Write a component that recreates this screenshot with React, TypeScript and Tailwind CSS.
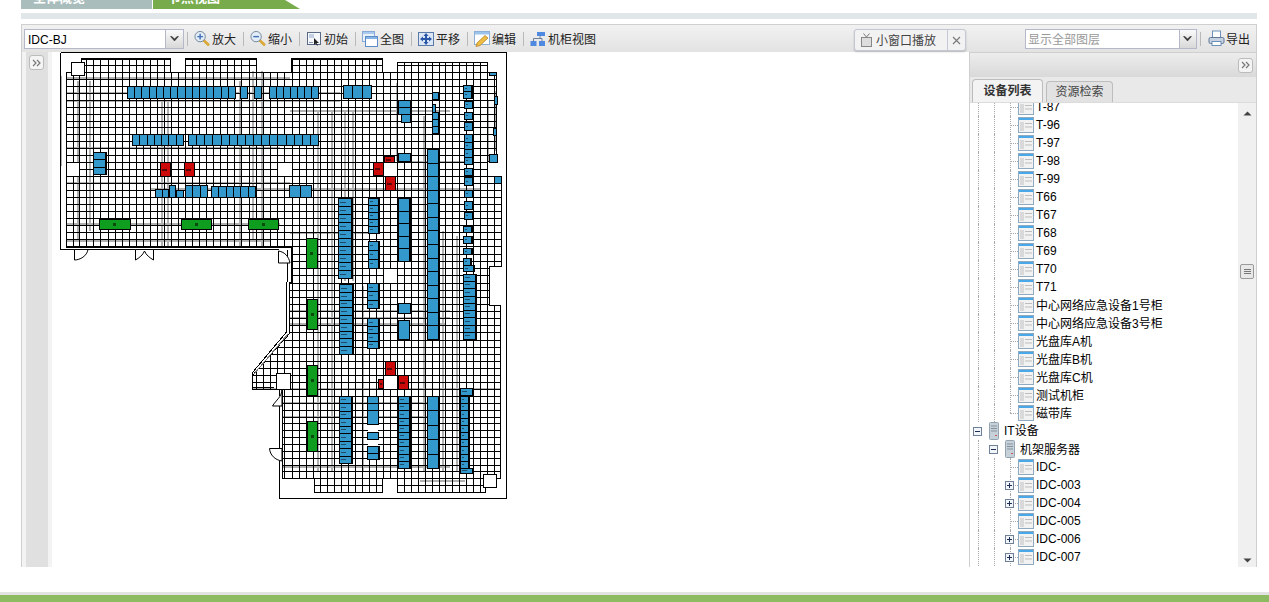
import React from 'react';

const cjk = '"Liberation Sans", "Noto Sans CJK SC", sans-serif';

// [x, y, w, h, cells, vertical?, label marks?]
type Rack = [number, number, number, number, number, boolean?, boolean?];

const blueRacks: Rack[] = [
  [127, 85, 108, 12, 15], [240, 85, 7, 12, 1], [254, 85, 7, 12, 1], [269, 85, 49, 12, 7], [343, 84, 28, 13, 3],
  [132, 133, 51, 11, 7], [188, 133, 130, 11, 16],
  [93, 151, 12, 22, 3, true],
  [155, 188, 13, 8, 2], [169, 184, 6, 12, 1], [176, 189, 7, 7, 1], [185, 184, 22, 12, 3], [211, 185, 44, 11, 6], [289, 184, 22, 12, 2],
  [398, 99, 12, 14, 2, true], [401, 113, 9, 8, 1], [398, 152, 12, 8, 1],
  [432, 91, 6, 7, 1], [432, 103, 3, 8, 1], [432, 111, 6, 21, 3, true],
  [338, 197, 13, 80, 10, true, true], [339, 283, 13, 70, 9, true, true],
  [368, 197, 10, 35, 5, true, true], [368, 240, 10, 27, 3, true, true],
  [367, 282, 11, 25, 3, true, true], [367, 317, 11, 30, 4, true, true],
  [398, 197, 11, 63, 5, true], [398, 302, 12, 10, 1], [398, 319, 11, 19, 1],
  [427, 148, 11, 190, 14, true],
  [463, 84, 8, 6, 1, false, true], [463, 90, 8, 7, 1, false, true], [464, 100, 8, 7, 1, false, true], [464, 111, 8, 7, 1, false, true],
  [464, 121, 8, 8, 1, false, true], [464, 133, 8, 30, 4, true, true], [464, 167, 8, 7, 1, false, true], [464, 176, 8, 8, 1, false, true],
  [464, 189, 8, 7, 1, false, true], [464, 200, 8, 8, 1, false, true], [464, 211, 8, 7, 1, false, true], [463, 225, 8, 6, 1, false, true],
  [463, 235, 8, 7, 1, false, true], [463, 247, 8, 6, 1, false, true], [463, 257, 7, 7, 1, false, true], [463, 264, 10, 6, 1, false, true],
  [463, 273, 12, 65, 9, true, true],
  [489, 71, 7, 3, 1], [494, 95, 3, 8, 1], [493, 127, 3, 7, 1], [489, 153, 8, 8, 1], [494, 175, 7, 7, 1],
  [339, 395, 12, 67, 9, true, true],
  [367, 395, 11, 7, 1], [367, 402, 11, 7, 1], [367, 409, 11, 14, 1], [367, 431, 11, 7, 1], [367, 445, 11, 13, 2, true],
  [398, 395, 11, 72, 10, true, true], [427, 395, 11, 72, 5, true],
  [460, 387, 12, 7, 1, false, true], [460, 395, 8, 72, 10, true, true], [460, 467, 12, 5, 1, false, true],
];

const greenRacks: number[][] = [
  [99, 218, 31, 10], [181, 218, 30, 10], [248, 218, 30, 10], [306, 237, 11, 30], [307, 298, 10, 30], [307, 364, 10, 30], [307, 420, 10, 30],
];

const redRacks: number[][] = [
  [160, 161, 10, 14], [184, 161, 10, 14], [384, 155, 10, 6], [373, 161, 10, 13], [385, 175, 10, 14],
  [385, 360, 10, 14], [378, 378, 5, 9], [398, 374, 10, 14],
];

const holes: number[][] = [
  [67, 162, 12, 13], [278, 162, 14, 13], [384, 162, 13, 13], [384, 375, 13, 13], [384, 268, 13, 14],
  [368, 424, 10, 7], [368, 439, 10, 6],
];

const grayV: number[][] = [
  [61, 75, 165], [78, 80, 240], [90, 80, 230], [162, 100, 245], [168, 100, 245], [240, 80, 245], [253, 70, 240], [262, 70, 245],
  [318, 110, 470], [332, 110, 470], [345, 110, 280], [353, 110, 280], [363, 285, 470], [397, 82, 160], [424, 115, 470], [443, 230, 470],
  [457, 235, 470], [488, 100, 160], [496, 90, 150],
];

const grayH: number[][] = [
  [67, 290, 77], [67, 340, 92], [67, 340, 100], [67, 280, 147], [290, 450, 110], [67, 290, 182], [150, 480, 188], [67, 280, 223],
  [67, 270, 240], [290, 380, 232], [289, 450, 310], [289, 450, 317], [289, 445, 323], [252, 500, 388], [282, 440, 402], [282, 440, 416],
  [282, 450, 466], [420, 465, 480], [397, 470, 161],
];

const gridPoly =
  '81.5,57.5 170.5,57.5 170.5,71.5 185.5,71.5 185.5,57.5 256.5,57.5 256.5,71.5 291.5,71.5 291.5,57.5 382.5,57.5 382.5,71.5 397.5,71.5 397.5,61.5 487.5,61.5 487.5,71.5 496.5,71.5 496.5,160.5 487.5,160.5 487.5,175.5 501.5,175.5 501.5,265.5 489.5,265.5 489.5,304.5 500.5,304.5 500.5,477.5 485.5,477.5 485.5,491.5 397.5,491.5 397.5,477.5 382.5,477.5 382.5,491.5 314.5,491.5 314.5,477.5 282.5,477.5 282.5,388.5 252.5,388.5 252.5,374.5 289.5,332.5 289.5,281.5 291.5,281.5 291.5,246.5 66.5,246.5 66.5,71.5 81.5,71.5';

// the drawing's grid is not quite regular, so each stretch has its own pitch
function gridLines(stretches: [number, number, number][]) {
  const lines: number[] = [];
  for (const [start, pitch, count] of stretches) {
    for (let k = 0; k < count; k++) lines.push(Math.round(start + k * pitch) + 0.5);
  }
  return lines;
}

const vLines = gridLines([[66.3, 6.5, 2], [79.3, 7.05, 28], [276.7, 7.5, 2], [291.7, 7, 13], [382.7, 7.15, 2], [397, 6.92, 13], [487, 7.35, 3]]);
const hLines = gridLines([[57.5, 6.89, 17], [174.6, 7.07, 10], [245.3, 7.28, 5], [281.7, 7.1, 15], [388.2, 6.85, 14], [484.1, 6.9, 2]]);

function RackCells({ rack, fill }: { rack: Rack; fill: string }) {
  const [x, y, w, h, n, vertical, mark] = rack;
  const cells = [];
  for (let i = 0; i < n; i++) {
    const cx = vertical ? x : x + Math.round((i * w) / n);
    const cy = vertical ? y + Math.round((i * h) / n) : y;
    const cw = vertical ? w : Math.round(((i + 1) * w) / n) - Math.round((i * w) / n);
    const ch = vertical ? Math.round(((i + 1) * h) / n) - Math.round((i * h) / n) : h;
    cells.push(
      <g key={i}>
        <rect x={cx + 0.5} y={cy + 0.5} width={cw} height={ch} fill={fill} stroke="#000" />
        {mark && <rect x={cx + 2} y={cy + Math.floor(ch / 2)} width={Math.max(cw - 7, 2)} height={1} fill="#1d4d6b" />}
      </g>
    );
  }
  return (
    <>
      {cells}
      {/* racks have a heavier right edge */}
      {(vertical || mark) && <rect x={x + w + 1} y={y} width={1} height={h + 1} fill="#000" />}
    </>
  );
}

function FloorPlan() {
  return (
    <svg width={450} height={450} viewBox="60 51 450 450" className="block" shapeRendering="crispEdges">
      <defs>
        <clipPath id="grid-area">
          <polygon points={gridPoly} />
        </clipPath>
      </defs>
      {grayV.map(([x, a, b], i) => (
        <line key={i} x1={x} x2={x} y1={a} y2={b} stroke="#b0b0b0" strokeWidth={2} />
      ))}
      {grayH.map(([a, b, y], i) => (
        <line key={i} x1={a} x2={b} y1={y} y2={y} stroke="#b0b0b0" strokeWidth={2} />
      ))}
      <g clipPath="url(#grid-area)">
        {vLines.map((x) => (
          <line key={x} x1={x} x2={x} y1={51} y2={500} stroke="#000" />
        ))}
        {hLines.map((y) => (
          <line key={y} x1={60} x2={510} y1={y} y2={y} stroke="#000" />
        ))}
      </g>
      <polygon points={gridPoly} fill="none" stroke="#000" />
      {holes.map(([x, y, w, h], i) => (
        <rect key={i} x={x} y={y} width={w} height={h} fill="#fff" />
      ))}
      {/* outer wall */}
      <path
        d="M60.5 51.5H506.5V497.5H279.5V405M279.5 388V395M60.5 51.5V248.5H279M287 248.5V280.5L286.5 331L252.5 371.5V386.5H274"
        fill="none"
        stroke="#000"
      />
      <path d="M254 373L288 333" fill="none" stroke="#777" />
      {/* corner boxes */}
      <rect x={71.5} y={61.5} width={13} height={13} fill="#fff" stroke="#000" />
      <rect x={483.5} y={473.5} width={13} height={13} fill="#fff" stroke="#000" />
      <rect x={276.5} y={372.5} width={14} height={16} fill="#fff" stroke="#000" />
      {/* doors */}
      <g shapeRendering="auto" fill="#fff" stroke="#000">
        <path d="M74.5 248.5V259C80 259 87 255 88 248.5Z" />
        <path d="M135.5 248.5V259C139 257 143 254 144.5 250C146 254 150 257 153.5 259V248.5Z" />
        <path d="M278.5 250C285 251 289 256 290 262H278.5Z" />
        <path d="M272.5 405H282V388C282 396 276 399 272.5 405Z" />
        <path d="M269.5 447.5H282V460C275 459 270 454 269.5 447.5Z" />
      </g>
      {blueRacks.map((r, i) => (
        <RackCells key={i} rack={r} fill="#3399cc" />
      ))}
      {greenRacks.map(([x, y, w, h], i) => (
        <g key={i}>
          <rect x={x + 0.5} y={y + 0.5} width={w} height={h} fill="#0f9d20" stroke="#000" strokeWidth={1} />
          <rect x={x + Math.floor(w / 2) - 1} y={y + Math.floor(h / 2) - 1} width={3} height={3} fill="#0a4a10" />
        </g>
      ))}
      {redRacks.map(([x, y, w, h], i) => (
        <g key={i}>
          <rect x={x + 0.5} y={y + 0.5} width={w} height={h} fill="#cc0a0a" stroke="#000" />
          <rect x={x + 2} y={y + Math.floor(h / 2)} width={Math.max(w - 5, 2)} height={2} fill="#5a0606" />
        </g>
      ))}
    </svg>
  );
}

function Sep() {
  return <span className="w-px h-[14px] bg-[#b9b9b9]" />;
}

function Expand() {
  return (
    <span className="flex w-[15px] h-[15px] items-center justify-center rounded-[3px] border border-[#bbb] bg-[#f4f4f4]">
      <svg width="9" height="8" viewBox="0 0 9 8" fill="none" stroke="#777" strokeWidth="1.2">
        <path d="M1 1L4 4L1 7M5 1L8 4L5 7" />
      </svg>
    </span>
  );
}

function ComboArrow({ w }: { w: string }) {
  return (
    <span className={`flex ${w} h-full items-center justify-center border-l border-[#b5b8c8] bg-gradient-to-b from-[#fafafa] to-[#d8d8d8]`}>
      <svg width="9" height="6" viewBox="0 0 9 6">
        <path d="M0.5 0.5L4.5 5L8.5 0.5L7 0.5L4.5 3L2 0.5Z" fill="#333" stroke="#333" strokeWidth="0.5" />
      </svg>
    </span>
  );
}

const toolIcons: Record<string, React.ReactNode> = {
  in: (
    <svg width="17" height="17" viewBox="0 0 17 17">
      <path d="M10.5 10.5L15 15" stroke="#d9a93a" strokeWidth="3" strokeLinecap="round" />
      <circle cx="6.5" cy="6.5" r="5.5" fill="#e3edf8" stroke="#6f8299" />
      <path d="M6.5 3.5V9.5M3.5 6.5H9.5" stroke="#3f6fb5" strokeWidth="1.5" />
    </svg>
  ),
  out: (
    <svg width="17" height="17" viewBox="0 0 17 17">
      <path d="M10.5 10.5L15 15" stroke="#d9a93a" strokeWidth="3" strokeLinecap="round" />
      <circle cx="6.5" cy="6.5" r="5.5" fill="#e3edf8" stroke="#6f8299" />
      <path d="M3.5 6.5H9.5" stroke="#3f6fb5" strokeWidth="1.5" />
    </svg>
  ),
  init: (
    <svg width="16" height="16" viewBox="0 0 16 16">
      <rect x="1.5" y="1.5" width="13" height="12" fill="#f7f8fb" stroke="#5a6a85" />
      <rect x="3" y="3" width="5" height="4" fill="#c3d0e4" />
      <path d="M3 11.5H7" stroke="#8d99ae" />
      <path d="M8 7L13 12H10.5L12 14.5H11L9.5 12.5L8 14Z" fill="#222" />
    </svg>
  ),
  full: (
    <svg width="16" height="16" viewBox="0 0 16 16">
      <rect x="0.5" y="0.5" width="12" height="10" fill="#e9f1fa" stroke="#86a9d6" />
      <rect x="1" y="1" width="11" height="2" fill="#a9c9ee" />
      <rect x="3.5" y="5.5" width="12" height="10" fill="#fff" stroke="#5b8cc9" />
      <rect x="4" y="6" width="11" height="2" fill="#84b3e6" />
    </svg>
  ),
  pan: (
    <svg width="16" height="16" viewBox="0 0 16 16">
      <rect x="0.5" y="1.5" width="15" height="13" fill="#dbe7f6" stroke="#5a7aa8" />
      <path d="M8 2L10.5 5H9V7H11V5.5L14 8L11 10.5V9H9V11H10.5L8 14L5.5 11H7V9H5V10.5L2 8L5 5.5V7H7V5H5.5Z" fill="#2a56a8" />
    </svg>
  ),
  edit: (
    <svg width="16" height="16" viewBox="0 0 16 16">
      <rect x="0.5" y="0.5" width="15" height="13" fill="#fff" stroke="#8cafd8" />
      <rect x="1" y="1" width="14" height="2.5" fill="#9cc3ec" />
      <path d="M2 15.5L3 12L11 4.5L14 7L6 14.5Z" fill="#eebd45" stroke="#b5842a" strokeWidth="0.8" />
    </svg>
  ),
  rack: (
    <svg width="16" height="16" viewBox="0 0 16 16">
      <rect x="7" y="1" width="8" height="4" fill="#4f8ae0" />
      <rect x="0.5" y="10" width="6" height="5" fill="#4f8ae0" />
      <rect x="9" y="10" width="6" height="5" fill="#4f8ae0" />
      <path d="M10 5V7.5M3.5 10V7.5H12V10" stroke="#6c7f9c" fill="none" />
    </svg>
  ),
};

function ToolButton({ icon, label }: { icon: string; label: string }) {
  return (
    <span className="flex items-center gap-[2px] ml-[6px] mr-[7px] text-[12px] leading-none text-[#222]">
      <span className="flex w-[16px] h-[17px] items-center justify-center">{toolIcons[icon]}</span>
      <span className="pt-[2px]">{label}</span>
    </span>
  );
}

function RowIcon() {
  return (
    <svg width="16" height="16" viewBox="0 0 16 16" className="shrink-0">
      <rect x="0.5" y="0.5" width="15" height="15" fill="#f2f2f2" stroke="#8fa9c0" />
      <rect x="1" y="1" width="14" height="2" fill="#4aa7e8" />
      <rect x="2" y="5" width="4" height="9" fill="#d9d9d9" />
      <path d="M7 6.5H14M7 10H14" stroke="#bdbdbd" />
    </svg>
  );
}

function ServerIcon() {
  return (
    <svg width="12" height="18" viewBox="0 0 12 18" className="shrink-0">
      <rect x="1.5" y="0.5" width="9" height="17" rx="1" fill="#c6d0d8" stroke="#93a3b0" />
      <path d="M3 4H9M3 6.5H9M3 9H9" stroke="#84929e" />
      <rect x="7" y="13" width="2" height="1" fill="#c55" />
    </svg>
  );
}

function Expander({ open }: { open?: boolean }) {
  return (
    <svg width="9" height="9" viewBox="0 0 9 9" className="shrink-0 bg-[#eef2f7]">
      <rect x="0.5" y="0.5" width="8" height="8" fill="#f2f5fa" stroke="#6f7f96" />
      <path d={open ? 'M2 4.5H7' : 'M2 4.5H7M4.5 2V7'} stroke="#1d2f52" />
    </svg>
  );
}

// one 16px indent column holding a dotted guide
function Guide() {
  return (
    <span className="w-4 h-full shrink-0">
      <span className="block ml-2 h-full border-l border-dotted border-[#aaa]" />
    </span>
  );
}

function Elbow({ last, expand }: { last?: boolean; expand?: boolean }) {
  return (
    <span className="relative flex w-4 h-full shrink-0 items-center justify-center">
      <span className={`absolute left-2 top-0 border-l border-dotted border-[#aaa] ${last ? 'h-1/2' : 'h-full'}`} />
      <span className="absolute left-2 top-1/2 w-2 border-t border-dotted border-[#aaa]" />
      {expand && (
        <span className="relative -ml-px">
          <Expander />
        </span>
      )}
    </span>
  );
}

function Leaf({ label, expand, last }: { label: string; expand?: boolean; last?: boolean }) {
  // CJK labels sit a pixel higher in this font stack
  const hasCjk = /[\u4e00-\u9fff]/.test(label);
  return (
    <div className="flex h-[18px] items-center shrink-0">
      <Guide />
      <Guide />
      <Elbow expand={expand} last={last} />
      <RowIcon />
      <span className={`ml-[2px] whitespace-nowrap text-[12px] leading-none text-black ${hasCjk ? 'pt-[2px]' : ''}`}>{label}</span>
    </div>
  );
}

const topLeaves = ['T-87', 'T-96', 'T-97', 'T-98', 'T-99', 'T66', 'T67', 'T68', 'T69', 'T70', 'T71', '中心网络应急设备1号柜', '中心网络应急设备3号柜', '光盘库A机', '光盘库B机', '光盘库C机', '测试机柜'];

export default function App() {
  return (
    <div className="flex flex-col h-[602px] w-full overflow-hidden bg-white" style={{ fontFamily: cjk }}>
      {/* cut off nav tabs */}
      <div className="flex h-[9px] shrink-0 ml-[21px] overflow-hidden text-[13px] font-bold text-white">
        <div className="w-[131px] h-full bg-[#a9bdbd] pl-[12px]">
          <span className="block -mt-[10px] leading-[16px]">全体概览</span>
        </div>
        <div className="w-[147px] h-full ml-px bg-[#77ab4c] pl-[15px] [clip-path:polygon(0_0,132px_0,147px_100%,0_100%)]">
          <span className="block -mt-[10px] leading-[16px]">节点视图</span>
        </div>
      </div>
      <div className="h-[6px] shrink-0 mt-[4px] mx-[21px] w-[1236px] bg-[#e1e6e8]" />

      {/* main panel */}
      <div className="flex flex-col h-[543px] mt-[5px] ml-[21px] w-[1236px] shrink-0 border-t border-x border-[#cfcfcf] bg-[#f3f3f3]">
        {/* toolbar */}
        <div className="relative flex h-[27px] shrink-0 items-center pl-[2px] bg-gradient-to-b from-[#f1f1f1] to-[#e3e3e3]">
          <div className="flex w-[160px] h-[20px] items-center justify-between border border-[#b5b8c8] bg-white text-[12px] leading-none text-black">
            <span className="pl-[3px] pt-[2px]">IDC-BJ</span>
            <ComboArrow w="w-[18px]" />
          </div>
          <span className="ml-[3px]" />
          <Sep />
          <ToolButton icon="in" label="放大" />
          <Sep />
          <ToolButton icon="out" label="缩小" />
          <Sep />
          <ToolButton icon="init" label="初始" />
          <Sep />
          <ToolButton icon="full" label="全图" />
          <Sep />
          <ToolButton icon="pan" label="平移" />
          <Sep />
          <ToolButton icon="edit" label="编辑" />
          <Sep />
          <ToolButton icon="rack" label="机柜视图" />

          <div className="ml-auto mr-[6px] flex items-center">
            <div className="flex w-[172px] h-[20px] items-center justify-between border border-[#b5b8c8] bg-white text-[12px] leading-none text-[#999]">
              <span className="pl-[2px] pt-[2px]">显示全部图层</span>
              <ComboArrow w="w-[17px]" />
            </div>
            <span className="ml-[3px]" />
            <Sep />
            <span className="flex items-center gap-[1px] ml-[7px] text-[12px] leading-none text-[#222]">
              <svg width="17" height="17" viewBox="0 0 17 17">
                <rect x="4.5" y="1" width="8" height="7" fill="#fff" stroke="#6d8fb8" />
                <rect x="1" y="7.5" width="15" height="6" rx="1.5" fill="#c6d2e2" stroke="#5f7896" />
                <rect x="4" y="11.5" width="9" height="4" fill="#fff" stroke="#6d8fb8" />
              </svg>
              <span className="pt-[2px]">导出</span>
            </span>
          </div>

          {/* small window popup */}
          <div className="absolute left-[832px] top-[4px] flex h-[22px] w-[112px] items-center rounded-[3px] border border-[#c3c8d4] bg-[#f2f2f2] shadow-[0_1px_2px_rgba(0,0,0,0.2)] text-[12px] leading-none text-[#444]">
            <span className="flex flex-1 items-center gap-[3px] pl-[5px] h-full">
              <svg width="13" height="15" viewBox="0 0 13 15" fill="none">
                <path d="M3.5 0.5L6.5 4L9.5 0.5" stroke="#777" />
                <rect x="1.5" y="4.5" width="10" height="9" fill="#ddd" stroke="#888" />
              </svg>
              <span className="pt-[2px]">小窗口播放</span>
            </span>
            <span className="flex w-[18px] h-full items-center justify-center border-l border-[#c3c8d4]">
              <svg width="9" height="9" viewBox="0 0 9 9">
                <path d="M1 1L8 8M8 1L1 8" stroke="#777" strokeWidth="1.1" />
              </svg>
            </span>
          </div>
        </div>

        <div className="flex flex-1 min-h-0">
          {/* left rail */}
          <div className="pl-[4px] shrink-0">
            <div className="w-[22px] h-full bg-[#e0e0e0] pt-[3px] pl-[3px]">
              <Expand />
            </div>
          </div>
          {/* map canvas */}
          <div className="flex-1 min-w-0 bg-white ml-[4px] overflow-hidden">
            <div className="ml-[8px] mt-0">
              <FloorPlan />
            </div>
          </div>

          {/* right panel */}
          <div className="flex flex-col w-[287px] shrink-0 border-l border-t border-[#cfcfcf]">
            <div className="flex h-[24px] shrink-0 items-center justify-end pr-[3px] bg-gradient-to-b from-[#ededed] to-[#d9d9d9]">
              <Expand />
            </div>
            <div className="flex h-[25px] shrink-0 items-end pl-[2px] gap-[3px] bg-[#e9e9e9] text-[12px] leading-none">
              <div className="flex w-[71px] h-[23px] items-center justify-center rounded-t-[4px] border-x border-t border-[#bdbdbd] bg-[#f3f3f3] font-bold text-[#333]">
                设备列表
              </div>
              <div className="flex w-[67px] h-[21px] items-center justify-center rounded-t-[4px] border-x border-t border-[#bdbdbd] bg-[#e2e2e2] text-[#444]">
                资源检索
              </div>
            </div>
            <div className="flex flex-1 min-h-0 border-t border-[#dcdcdc] bg-white">
              {/* tree */}
              <div className="flex flex-col flex-1 min-w-0 overflow-hidden">
                <div className="flex flex-col -mt-[5px]">
                  {topLeaves.map((t) => (
                    <Leaf key={t} label={t} />
                  ))}
                  <Leaf label="磁带库" last />
                  <div className="flex h-[18px] items-center shrink-0">
                    <span className="flex w-4 justify-center -ml-px">
                      <Expander open />
                    </span>
                    <span className="ml-[3px] mr-[4px]">
                      <ServerIcon />
                    </span>
                    <span className="text-[12px] leading-none text-black">IT设备</span>
                  </div>
                  <div className="flex h-[18px] items-center shrink-0">
                    <Guide />
                    <span className="flex w-4 justify-center -ml-px">
                      <Expander open />
                    </span>
                    <span className="ml-[3px] mr-[4px]">
                      <ServerIcon />
                    </span>
                    <span className="pt-[2px] text-[12px] leading-none text-black">机架服务器</span>
                  </div>
                  <Leaf label="IDC-" />
                  <Leaf label="IDC-003" expand />
                  <Leaf label="IDC-004" expand />
                  <Leaf label="IDC-005" />
                  <Leaf label="IDC-006" expand />
                  <Leaf label="IDC-007" expand />
                </div>
              </div>
              {/* scrollbar */}
              <div className="flex flex-col items-center w-[18px] shrink-0 bg-[#f0f0f0]">
                <svg width="9" height="5" viewBox="0 0 9 5" className="mt-[8px]">
                  <path d="M0.5 4.5L4.5 0.5L8.5 4.5Z" fill="#444" />
                </svg>
                <div className="flex flex-col items-center justify-center gap-px mt-[148px] w-[14px] h-[15px] rounded-[2px] border border-[#9a9a9a] bg-[#e8e8e8]">
                  <span className="w-[7px] h-px bg-[#777]" />
                  <span className="w-[7px] h-px bg-[#777]" />
                  <span className="w-[7px] h-px bg-[#777]" />
                </div>
                <svg width="9" height="5" viewBox="0 0 9 5" className="mt-auto mb-[4px]">
                  <path d="M0.5 0.5L4.5 4.5L8.5 0.5Z" fill="#444" />
                </svg>
              </div>
            </div>
          </div>
        </div>
      </div>

      {/* footer */}
      <div className="mt-auto h-[3px] shrink-0 bg-[#e3e3e3]" />
      <div className="h-[7px] shrink-0 bg-[#8dbb62]" />
    </div>
  );
}
